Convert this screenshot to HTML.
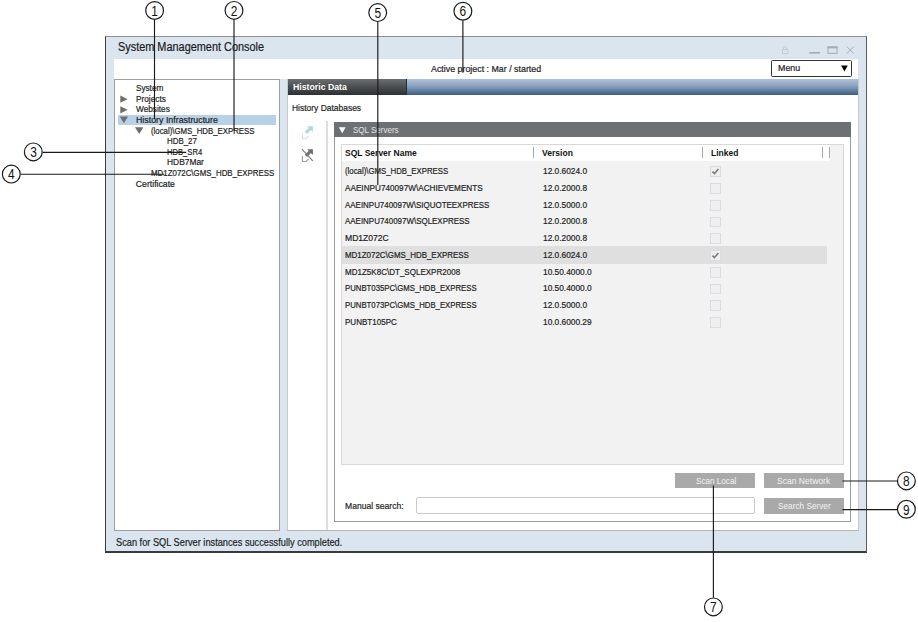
<!DOCTYPE html>
<html><head><meta charset="utf-8">
<style>
*{margin:0;padding:0;box-sizing:border-box}
html,body{width:918px;height:622px;overflow:hidden;background:#fff;font-family:"Liberation Sans",sans-serif;color:#1e1e1e}
.a{position:absolute}
.t{position:absolute;white-space:nowrap;line-height:12px;height:12px;transform-origin:0 0;-webkit-text-stroke:0.2px currentColor}
.cb{position:absolute;left:710.3px;width:10.8px;height:10.8px;border:1px solid #d9dde3;background:#efefef}
.cb svg{position:absolute;left:-1px;top:-1px}
.sep{position:absolute;top:147px;width:1px;height:11px;background:#a8a8a8}
</style></head>
<body>
<!-- window -->
<div class="a" style="left:105px;top:36px;width:762px;height:517px;background:#dae5ef;border-top:1px solid #8f8f8f;border-left:1px solid #3c3c3c;border-right:1px solid #5a5a5a;border-bottom:2px solid #3a3a3a"></div>
<!-- window controls -->
<svg class="a" style="left:775px;top:40px" width="85" height="18" viewBox="775 40 85 18">
  <g fill="none" stroke="#c3c8cd" stroke-width="1">
    <rect x="782.5" y="49.5" width="5.5" height="4.2" rx="0.5"/>
    <path d="M783.6 49.5 V48.2 a1.6 1.6 0 0 1 3.2 0 V49.5"/>
  </g>
  <rect x="809.3" y="52" width="10.8" height="1.6" fill="#a6abb0"/>
  <g fill="none" stroke="#a6abb0">
    <rect x="828" y="46.8" width="9" height="6.5" stroke-width="1"/>
    <line x1="827.5" y1="47.6" x2="837.5" y2="47.6" stroke-width="1.6"/>
    <path d="M846.8 46.6 L853.8 53.6 M853.8 46.6 L846.8 53.6" stroke-width="1"/>
  </g>
</svg>
<!-- white bar -->
<div class="a" style="left:114px;top:59px;width:744px;height:20px;background:#fff"></div>
<!-- menu -->
<div class="a" style="left:771.4px;top:59.7px;width:80.4px;height:17.6px;border:1.4px solid #333;background:#fff;border-radius:1.5px"></div>
<svg class="a" style="left:840px;top:64px" width="10" height="9"><path d="M1.1 1.4 H7.8 L4.45 7.6 Z" fill="#000"/></svg>
<!-- tree panel -->
<div class="a" style="left:114px;top:79px;width:166px;height:452px;background:#fff;border:1px solid #a0a0a0"></div>
<div class="a" style="left:118px;top:115px;width:158px;height:10px;background:#b9d1e6"></div>
<svg class="a" style="left:114px;top:90px" width="40" height="50">
  <path d="M6.3 5.6 L13.6 9.2 L6.3 12.8 Z" fill="#6e6e6e"/>
  <path d="M6.3 16.2 L13.6 19.8 L6.3 23.4 Z" fill="#6e6e6e"/>
  <path d="M5.8 26.4 H14 L9.9 33.3 Z" fill="#6e6e6e"/>
  <path d="M21 37.3 H29.4 L25.2 44 Z" fill="#6e6e6e"/>
</svg>
<!-- right panel -->
<div class="a" style="left:287px;top:79px;width:572px;height:452px;background:#fff;border-left:1px solid #c8c8c8;border-right:1.4px solid #c8c8c8;border-bottom:1px solid #b4b4b4"></div>
<div class="a" style="left:288px;top:78.8px;width:570px;height:16.7px;background:linear-gradient(#aec2d9,#8ea6c2 40%,#3c5c87)"></div>
<div class="a" style="left:288px;top:78.8px;width:119px;height:16.7px;background:linear-gradient(#6b6f71,#4a4e50 50%,#2e3133);border-right:1px solid #2e2a2a"></div>
<!-- link icons -->
<svg class="a" style="left:298px;top:122px" width="20" height="44" viewBox="298 122 20 44">
  <g>
    <path d="M305.9 132.9 L310.4 128.4" stroke="#b4d9e0" stroke-width="3.2"/>
    <path d="M307.2 126.3 L312.9 126.3 L312.9 132 Z" fill="#aed5dd"/>
    <path d="M302.4 133.2 V138.6 H306.4 M306.2 138.4 L308.6 136" stroke="#cfe6ea" stroke-width="1.1" fill="none"/>
  </g>
  <g>
    <path d="M305.9 155.8 L310.4 151.3" stroke="#747474" stroke-width="3.2"/>
    <path d="M307.2 149.2 L312.9 149.2 L312.9 154.9 Z" fill="#6c6c6c"/>
    <path d="M302.4 156 V161.5 H306.4 M306.2 161.3 L308.6 158.9" stroke="#9a9a9a" stroke-width="1.1" fill="none"/>
    <path d="M301.9 149.2 L312.8 160.8" stroke="#7a7a7a" stroke-width="1.1" fill="none"/>
  </g>
</svg>
<!-- separator -->
<div class="a" style="left:326.2px;top:121px;width:1.6px;height:409px;background:#dedede"></div>
<!-- group box -->
<div class="a" style="left:334px;top:121.5px;width:517px;height:400.5px;border:1px solid #9c9c9c;border-top:none;background:#fff"></div>
<div class="a" style="left:334px;top:121.5px;width:517px;height:15.5px;background:#6d7173"></div>
<svg class="a" style="left:336px;top:124.5px" width="12" height="10"><path d="M2.8 2.2 H9.6 L6.2 8.2 Z" fill="#fff"/></svg>
<!-- table -->
<div class="a" style="left:341px;top:144px;width:502.5px;height:320.6px;background:#f2f2f2;border:1px solid #d8d8d8"></div>
<div class="a" style="left:342px;top:145px;width:488px;height:16px;background:#fff"></div>
<div class="sep" style="left:533.4px"></div>
<div class="sep" style="left:702px"></div>
<div class="sep" style="left:822.3px"></div>
<div class="sep" style="left:828.6px"></div>
<div class="a" style="left:342px;top:246.2px;width:485px;height:17.6px;background:#dfdfdf"></div>
<div class="cb" style="top:166.20px"><svg width=11 height=11 viewBox="0 0 11 11"><path d="M2.4 5.6 L4.5 7.6 L8.4 2.9" stroke="#7c7c7c" stroke-width="1.6" fill="none"/></svg></div>
<div class="cb" style="top:182.97px"></div>
<div class="cb" style="top:199.74px"></div>
<div class="cb" style="top:216.51px"></div>
<div class="cb" style="top:233.28px"></div>
<div class="cb" style="top:250.05px"><svg width=11 height=11 viewBox="0 0 11 11"><path d="M2.4 5.6 L4.5 7.6 L8.4 2.9" stroke="#7c7c7c" stroke-width="1.6" fill="none"/></svg></div>
<div class="cb" style="top:266.82px"></div>
<div class="cb" style="top:283.59px"></div>
<div class="cb" style="top:300.36px"></div>
<div class="cb" style="top:317.13px"></div>
<!-- buttons -->
<div class="a" style="left:675.3px;top:472.8px;width:80px;height:15.6px;background:#a9a9a9"></div>
<div class="a" style="left:763.9px;top:472.8px;width:79.8px;height:15.6px;background:#a9a9a9"></div>
<div class="a" style="left:763.9px;top:498px;width:79.8px;height:15.6px;background:#a9a9a9"></div>
<div class="a" style="left:415.6px;top:496.8px;width:339.8px;height:17.7px;border:1px solid #cacaca;border-radius:2px;background:#fff"></div>
<div class="t" style="left:118.30px;top:41.04px;font-size:12px;transform:scaleX(0.9083);color:#1c1c1c">System Management Console</div>
<div class="t" style="left:431.10px;top:62.69px;font-size:8.7px;transform:scaleX(1.0183)">Active project : Mar / started</div>
<div class="t" style="left:777.60px;top:62.39px;font-size:8.7px;transform:scaleX(1.0228)">Menu</div>
<div class="t" style="left:135.80px;top:82.29px;font-size:8.7px;transform:scaleX(0.9399)">System</div>
<div class="t" style="left:135.80px;top:92.79px;font-size:8.7px;transform:scaleX(0.9520)">Projects</div>
<div class="t" style="left:135.80px;top:103.09px;font-size:8.7px;transform:scaleX(0.9496)">Websites</div>
<div class="t" style="left:135.80px;top:113.89px;font-size:8.7px;transform:scaleX(1.0150)">History Infrastructure</div>
<div class="t" style="left:151.00px;top:124.59px;font-size:8.7px;transform:scaleX(0.9009)">(local)\GMS_HDB_EXPRESS</div>
<div class="t" style="left:166.60px;top:135.09px;font-size:8.7px;transform:scaleX(0.9089)">HDB_27</div>
<div class="t" style="left:166.60px;top:145.89px;font-size:8.7px;transform:scaleX(0.8772)">HDB_SR4</div>
<div class="t" style="left:166.60px;top:156.39px;font-size:8.7px;transform:scaleX(0.9675)">HDB7Mar</div>
<div class="t" style="left:151.20px;top:166.99px;font-size:8.7px;transform:scaleX(0.9089)">MD1Z072C\GMS_HDB_EXPRESS</div>
<div class="t" style="left:135.80px;top:177.59px;font-size:8.7px">Certificate</div>
<div class="t" style="left:293.00px;top:80.59px;font-size:8.7px;transform:scaleX(1.0045);font-weight:bold;-webkit-text-stroke:0;color:#ffffff">Historic Data</div>
<div class="t" style="left:292.40px;top:102.39px;font-size:8.7px;transform:scaleX(0.9730)">History Databases</div>
<div class="t" style="left:352.50px;top:123.59px;font-size:8.7px;transform:scaleX(0.9229);color:#e6e6e6;-webkit-text-stroke:0">SQL Servers</div>
<div class="t" style="left:345.00px;top:147.09px;font-size:8.7px;transform:scaleX(0.9787);font-weight:bold;-webkit-text-stroke:0;color:#111">SQL Server Name</div>
<div class="t" style="left:542.20px;top:146.99px;font-size:8.7px;transform:scaleX(0.9846);font-weight:bold;-webkit-text-stroke:0;color:#111">Version</div>
<div class="t" style="left:710.70px;top:146.99px;font-size:8.7px;transform:scaleX(0.9751);font-weight:bold;-webkit-text-stroke:0;color:#111">Linked</div>
<div class="t" style="left:345.20px;top:164.99px;font-size:8.7px;transform:scaleX(0.8983)">(local)\GMS_HDB_EXPRESS</div>
<div class="t" style="left:542.50px;top:164.99px;font-size:8.7px;transform:scaleX(0.9596)">12.0.6024.0</div>
<div class="t" style="left:345.20px;top:181.76px;font-size:8.7px;transform:scaleX(0.9413)">AAEINPU740097W\ACHIEVEMENTS</div>
<div class="t" style="left:542.50px;top:181.76px;font-size:8.7px;transform:scaleX(0.9596)">12.0.2000.8</div>
<div class="t" style="left:345.20px;top:198.53px;font-size:8.7px;transform:scaleX(0.9141)">AAEINPU740097W\SIQUOTEEXPRESS</div>
<div class="t" style="left:542.50px;top:198.53px;font-size:8.7px;transform:scaleX(0.9596)">12.0.5000.0</div>
<div class="t" style="left:345.20px;top:215.30px;font-size:8.7px;transform:scaleX(0.9151)">AAEINPU740097W\SQLEXPRESS</div>
<div class="t" style="left:542.50px;top:215.30px;font-size:8.7px;transform:scaleX(0.9596)">12.0.2000.8</div>
<div class="t" style="left:345.20px;top:232.07px;font-size:8.7px;transform:scaleX(0.9854)">MD1Z072C</div>
<div class="t" style="left:542.50px;top:232.07px;font-size:8.7px;transform:scaleX(0.9596)">12.0.2000.8</div>
<div class="t" style="left:345.20px;top:248.84px;font-size:8.7px;transform:scaleX(0.9126)">MD1Z072C\GMS_HDB_EXPRESS</div>
<div class="t" style="left:542.50px;top:248.84px;font-size:8.7px;transform:scaleX(0.9596)">12.0.6024.0</div>
<div class="t" style="left:345.20px;top:265.61px;font-size:8.7px;transform:scaleX(0.9243)">MD1Z5K8C\DT_SQLEXPR2008</div>
<div class="t" style="left:542.50px;top:265.61px;font-size:8.7px;transform:scaleX(0.9589)">10.50.4000.0</div>
<div class="t" style="left:345.20px;top:282.38px;font-size:8.7px;transform:scaleX(0.8938)">PUNBT035PC\GMS_HDB_EXPRESS</div>
<div class="t" style="left:542.50px;top:282.38px;font-size:8.7px;transform:scaleX(0.9589)">10.50.4000.0</div>
<div class="t" style="left:345.20px;top:299.15px;font-size:8.7px;transform:scaleX(0.8938)">PUNBT073PC\GMS_HDB_EXPRESS</div>
<div class="t" style="left:542.50px;top:299.15px;font-size:8.7px;transform:scaleX(0.9596)">12.0.5000.0</div>
<div class="t" style="left:345.20px;top:315.92px;font-size:8.7px;transform:scaleX(0.9259)">PUNBT105PC</div>
<div class="t" style="left:542.50px;top:315.92px;font-size:8.7px;transform:scaleX(0.9589)">10.0.6000.29</div>
<div class="t" style="left:696.00px;top:474.69px;font-size:8.7px;transform:scaleX(0.9360);color:#f4f4f4;-webkit-text-stroke:0">Scan Local</div>
<div class="t" style="left:777.20px;top:474.69px;font-size:8.7px;transform:scaleX(0.9830);color:#f4f4f4;-webkit-text-stroke:0">Scan Network</div>
<div class="t" style="left:777.60px;top:500.39px;font-size:8.7px;transform:scaleX(0.9491);color:#f4f4f4;-webkit-text-stroke:0">Search Server</div>
<div class="t" style="left:345.40px;top:499.57px;font-size:9.6px;transform:scaleX(0.8933)">Manual search:</div>
<div class="t" style="left:116.40px;top:535.89px;font-size:11px;transform:scaleX(0.8387)">Scan for SQL Server instances successfully completed.</div>
<!-- callouts -->
<svg class="a" style="left:0;top:0" width="918" height="622" viewBox="0 0 918 622">
  <g stroke="#1a1a1a" stroke-width="1.15" fill="none">
    <line x1="154.5" y1="19.5" x2="154.5" y2="118.8"/>
    <line x1="234" y1="19.5" x2="234" y2="130.8"/>
    <line x1="42.5" y1="152.3" x2="186.2" y2="152.3"/>
    <line x1="20.5" y1="174.2" x2="164.4" y2="174.2"/>
    <line x1="377.8" y1="22" x2="377.8" y2="185"/>
    <line x1="462.9" y1="20.5" x2="462.9" y2="72.7"/>
    <line x1="713.4" y1="485.5" x2="713.4" y2="597.8"/>
    <line x1="842.4" y1="481" x2="897.3" y2="481"/>
    <line x1="842.4" y1="509.6" x2="897.3" y2="509.6"/>
  </g>
  <g stroke="#1a1a1a" stroke-width="1.2" fill="#fff">
    <circle cx="154.6" cy="10.45" r="8.9"/>
    <circle cx="234" cy="10.4" r="8.9"/>
    <circle cx="33.3" cy="151.9" r="8.9"/>
    <circle cx="11.3" cy="174.1" r="8.9"/>
    <circle cx="377.7" cy="12.6" r="8.9"/>
    <circle cx="462.9" cy="11.2" r="8.9"/>
    <circle cx="713.4" cy="606.9" r="8.9"/>
    <circle cx="906.4" cy="480.9" r="8.9"/>
    <circle cx="906.4" cy="509.3" r="8.9"/>
  </g>
  <g font-family="Liberation Sans" font-size="14.2" fill="#111" text-anchor="middle">
    <text transform="translate(154.5,16.1) scale(0.84,1)">1</text>
    <text transform="translate(234,16.0) scale(0.84,1)">2</text>
    <text transform="translate(33.5,157.1) scale(0.84,1)">3</text>
    <text transform="translate(11.4,179.29999999999998) scale(0.84,1)">4</text>
    <text transform="translate(377.7,17.8) scale(0.84,1)">5</text>
    <text transform="translate(462.9,16.4) scale(0.84,1)">6</text>
    <text transform="translate(713.4,612.1) scale(0.84,1)">7</text>
    <text transform="translate(906.4,486.09999999999997) scale(0.84,1)">8</text>
    <text transform="translate(906.4,514.5) scale(0.84,1)">9</text>
  </g>
</svg>
</body></html>
